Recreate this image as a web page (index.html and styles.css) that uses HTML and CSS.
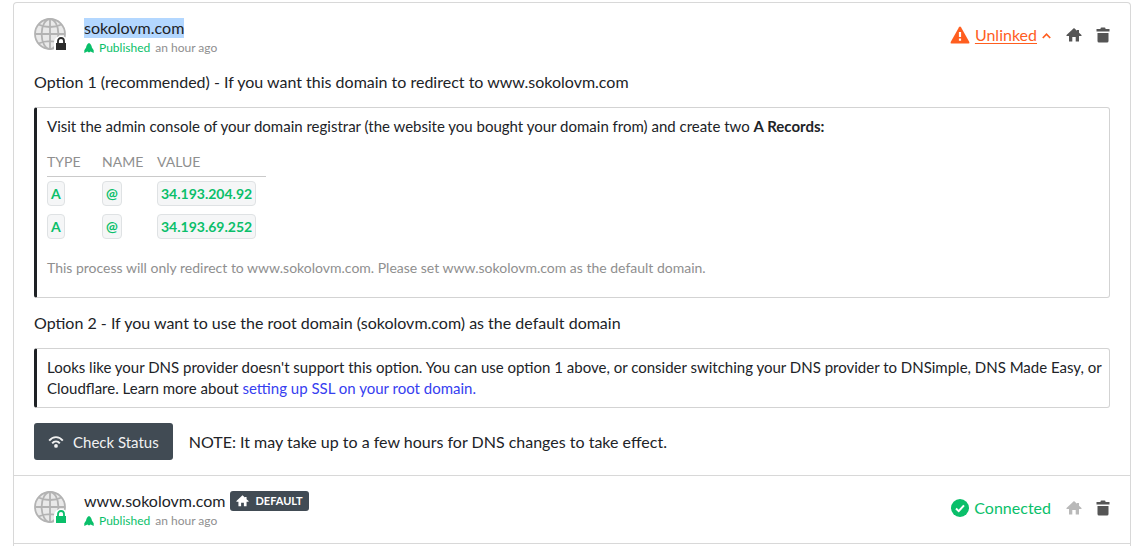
FILE: index.html
```html
<!DOCTYPE html>
<html lang="en">
<head>
<meta charset="utf-8">
<meta name="viewport" content="width=device-width, initial-scale=1">
<title>Custom domains</title>
<link rel="stylesheet" href="styles.css">
</head>
<body>
<svg class="sprite" aria-hidden="true">
  <symbol id="globe" viewBox="0 0 32 32">
    <circle cx="16" cy="16" r="15" fill="#e9e9e9"/>
    <g fill="none" stroke="#b3b3b3" stroke-width="1.8">
      <circle cx="16" cy="16" r="15"/>
      <ellipse cx="16" cy="16" rx="8.4" ry="15"/>
      <path d="M16 1v30M1 16h30M4.5 6.5C11 9.800 21 9.800 27.500 6.500M4.500 25.500C11 22.200 21 22.200 27.500 25.500"/>
    </g>
  </symbol>
  <symbol id="lock" viewBox="0 0 14 16">
    <path d="M0 5.500Q1.500 0 7 0t7 5.500V16H0z" fill="#fff"/>
    <path d="M4 8V5a3 3 0 0 1 6 0v3" fill="none" stroke="currentColor" stroke-width="1.800"/>
    <path d="M2 7h10v7H2z" fill="currentColor"/>
  </symbol>
  <symbol id="rocket" viewBox="0 0 10 10">
    <path d="M5 0C6.800 1 7.800 2.600 7.900 4.500L9.700 7.200V10L6.600 8.600 5 9.600 3.400 8.600.3 10V7.200L2.100 4.500C2.200 2.600 3.200 1 5 0z" fill="currentColor"/>
  </symbol>
  <symbol id="home" viewBox="0 0 16 14">
    <path d="M8 0l3 2.800V2h2v2.700L15.500 7v1H13v5.500H9.700V9H6.300v4.500H3V8H.5V7z" fill="currentColor"/>
  </symbol>
  <symbol id="trash" viewBox="0 0 14 16">
    <path d="M.5 2H4.500V1.500Q4.500.5 5.500.5h3q1 0 1 1V2h4v2.500H.5zM1.500 6h11v8q0 1.500-1.500 1.500H3Q1.500 15.500 1.500 14z" fill="currentColor"/>
  </symbol>
  <symbol id="warning" viewBox="0 0 20 18">
    <path d="M10 0.500Q10.600.5 11 1.200L19.300 16q.6 1.500-.8 1.500h-17Q.1 17.500.7 16L9 1.200Q9.400.5 10 .5z" fill="currentColor"/>
    <path d="M8.900 6h2.200v5H8.900zM8.900 12.600h2.200v2.200H8.900z" fill="#fff"/>
  </symbol>
  <symbol id="chevron" viewBox="0 0 8 6">
    <path d="M.7 5.200L4 1.800l3.300 3.400" fill="none" stroke="currentColor" stroke-width="1.500"/>
  </symbol>
  <symbol id="check" viewBox="0 0 18 18">
    <circle cx="9" cy="9" r="9" fill="currentColor"/>
    <path d="M5 9.500l2.700 2.600L13 6.400" fill="none" stroke="#fff" stroke-width="2"/>
  </symbol>
  <symbol id="wifi" viewBox="0 0 16 12">
    <g fill="none" stroke="currentColor" stroke-width="1.900">
      <path d="M1.200 4.600C5 0 11 0 14.800 4.600M4.200 7.400C6.200 4.700 9.800 4.700 11.800 7.400"/>
    </g>
    <circle cx="8" cy="9.900" r="1.900" fill="currentColor"/>
  </symbol>
</svg>

<main class="domains">
  <section class="domain">
    <header class="domain-head">
      <div class="avatar">
        <svg class="globe"><use href="#globe"/></svg>
        <svg class="lock"><use href="#lock"/></svg>
      </div>
      <div class="identity">
        <div class="title"><span class="name selected">sokolovm.com</span></div>
        <div class="meta"><svg class="rocket"><use href="#rocket"/></svg><span class="published">Published</span><span>an hour ago</span></div>
      </div>
      <div class="status unlinked">
        <svg class="warning"><use href="#warning"/></svg>
        <a href="#details">Unlinked</a>
        <svg class="chevron"><use href="#chevron"/></svg>
      </div>
      <div class="actions">
        <button type="button" class="icon-button" aria-label="Make default"><svg class="home"><use href="#home"/></svg></button>
        <button type="button" class="icon-button" aria-label="Delete domain"><svg class="trash"><use href="#trash"/></svg></button>
      </div>
    </header>

    <div class="details" id="details">
      <h2 class="option">Option 1 (recommended) - If you want this domain to redirect to www.sokolovm.com</h2>
      <div class="box">
        <p>Visit the admin console of your domain registrar (the website you bought your domain from) and create two <strong>A Records:</strong></p>
        <table class="records">
          <thead><tr><th>TYPE</th><th>NAME</th><th class="value">VALUE</th></tr></thead>
          <tbody>
            <tr><td><code>A</code></td><td><code>@</code></td><td><code>34.193.204.92</code></td></tr>
            <tr><td><code>A</code></td><td><code>@</code></td><td><code>34.193.69.252</code></td></tr>
          </tbody>
        </table>
        <p class="hint">This process will only redirect to www.sokolovm.com. Please set www.sokolovm.com as the default domain.</p>
      </div>
      <h2 class="option">Option 2 - If you want to use the root domain (sokolovm.com) as the default domain</h2>
      <div class="box">
        <p>Looks like your DNS provider doesn't support this option. You can use option 1 above, or consider switching your DNS provider to DNSimple, DNS Made Easy, or Cloudflare. Learn more about <a href="#ssl">setting up SSL on your root domain.</a></p>
      </div>
      <div class="check">
        <button type="button" class="check-button"><svg class="wifi"><use href="#wifi"/></svg>Check Status</button>
        <span>NOTE: It may take up to a few hours for DNS changes to take effect.</span>
      </div>
    </div>
  </section>

  <section class="domain">
    <header class="domain-head">
      <div class="avatar secure">
        <svg class="globe"><use href="#globe"/></svg>
        <svg class="lock"><use href="#lock"/></svg>
      </div>
      <div class="identity">
        <div class="title"><span class="name">www.sokolovm.com</span><span class="badge"><svg class="badge-home"><use href="#home"/></svg>DEFAULT</span></div>
        <div class="meta"><svg class="rocket"><use href="#rocket"/></svg><span class="published">Published</span><span>an hour ago</span></div>
      </div>
      <div class="status connected">
        <svg class="tick"><use href="#check"/></svg>
        <span>Connected</span>
      </div>
      <div class="actions">
        <button type="button" class="icon-button" aria-label="Default domain" disabled><svg class="home"><use href="#home"/></svg></button>
        <button type="button" class="icon-button" aria-label="Delete domain"><svg class="trash"><use href="#trash"/></svg></button>
      </div>
    </header>
  </section>
</main>
</body>
</html>
```
FILE: styles.css
```css
* { box-sizing: border-box; }

body {
  margin: 0;
  min-height: 100vh;
  padding: 2px 13px 0;
  display: flex;
  background: #fff;
  color: #212327;
  font: 16px/20px Lato, "Open Sans", sans-serif;
}

svg { display: block; flex: none; }
.sprite { position: absolute; width: 0; height: 0; }
p, h2 { margin: 0; }

.domains {
  flex: 1;
  border: 1px solid #d8d8d8;
  border-bottom: 0;
  border-radius: 4px 4px 0 0;
}

.domain { padding: 15px 20px; border-bottom: 1px solid #d8d8d8; }

.domain-head { display: flex; align-items: flex-start; }

.avatar { position: relative; margin-right: 18px; color: #2b2b2b; }
.avatar.secure { color: #0abf6a; }
.globe { width: 32px; height: 32px; }
.lock { position: absolute; right: -2px; bottom: -2px; width: 14px; height: 16px; }

.identity { flex: 1; }
.title { display: flex; align-items: center; gap: 5px; height: 20px; }
.selected { background: #b3d7ff; }
.meta { display: flex; align-items: center; gap: 5px; margin-top: 2px; font-size: 12px; line-height: 15px; color: #8f8f8f; }
.rocket { width: 10px; height: 10px; color: #0abf6a; }
.published { color: #0abf6a; }

.badge {
  display: flex;
  align-items: center;
  gap: 6px;
  height: 20px;
  padding: 0 6px;
  border-radius: 3px;
  background: #414b54;
  color: #fff;
  font-size: 11px;
  font-weight: 700;
}
.badge-home { width: 13px; height: 12px; }

.status { display: flex; align-items: center; gap: 5px; height: 34px; }
.unlinked { color: #ff5e1f; }
.unlinked a { color: inherit; text-underline-offset: 2px; }
.connected { color: #0abf6a; }
.warning { width: 20px; height: 18px; }
.chevron { width: 9px; height: 7px; }
.tick { width: 18px; height: 18px; }

.actions { display: flex; gap: 14px; height: 34px; margin-left: 15px; }
.icon-button { display: flex; padding: 0; border: 0; background: none; color: #555; align-items: center; }
.icon-button:disabled { color: #b9b9b9; }
.home { width: 16px; height: 14px; }
.trash { width: 14px; height: 16px; }

.option { font-size: 16px; font-weight: 400; line-height: 20px; margin: 15px 0; }
.details .option:first-child { margin-top: 17px; }

.box {
  padding: 8px 5px 8px 10px;
  border: 1px solid #d3d3d3;
  border-left: 3px solid #1e2125;
  border-radius: 3px;
  font-size: 15px;
  line-height: 21px;
}
.box a { color: #3640f0; text-decoration: none; }

.records { margin: 14px 0; border-collapse: collapse; font-size: 14px; line-height: 21px; }
.records th { padding: 0 12px 4px 0; border-bottom: 1px solid #cacaca; color: #8f8f8f; font-weight: 400; text-align: left; min-width: 55px; }
.records .value { min-width: 109px; }
.records td { padding: 4px 0; }
.records code {
  display: inline-block;
  padding: 0 3px;
  border: 1px solid #dfe2e4;
  border-radius: 4px;
  background: #f5f6f7;
  color: #0abf6a;
  font: 700 14px/23px Lato, sans-serif;
}
.hint { padding-bottom: 11px; color: #8f8f8f; font-size: 14px; }

.check { display: flex; align-items: center; gap: 16px; margin-top: 15px; }
.check-button {
  display: flex;
  align-items: center;
  gap: 9px;
  height: 37px;
  padding: 0 14px;
  border: 0;
  border-radius: 3px;
  background: #414b54;
  color: #f2f2f2;
  font: inherit;
  font-size: 15px;
}
.wifi { width: 16px; height: 12px; }
```
